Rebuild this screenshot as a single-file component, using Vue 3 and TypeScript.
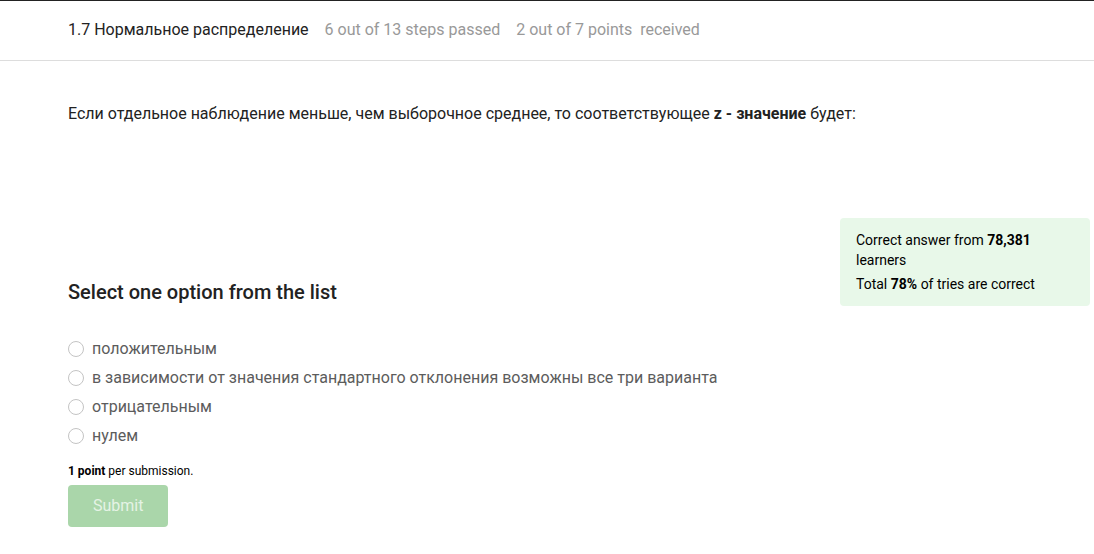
<script setup lang="ts">
import { ref } from 'vue'

const options: string[] = [
  'положительным',
  'в зависимости от значения стандартного отклонения возможны все три варианта',
  'отрицательным',
  'нулем',
]
const selected = ref<string | null>(null)
</script>

<template>
  <div class="page">
    <header class="topbar">
      <h1 class="lesson">1.7 Нормальное распределение</h1>
      <span>6 out of 13 steps passed</span>
      <span>2 out of 7 points&nbsp; received</span>
    </header>
    <main class="content">
      <p class="question">
        Если отдельное наблюдение меньше, чем выборочное среднее, то соответствующее
        <b>z - значение</b> будет:
      </p>
      <div class="quiz">
        <form class="form" @submit.prevent>
          <fieldset class="choices">
            <legend class="title">Select one option from the list</legend>
            <label v-for="option in options" :key="option" class="choice">
              <input v-model="selected" class="radio" type="radio" name="answer" :value="option" />
              <span>{{ option }}</span>
            </label>
          </fieldset>
          <p class="points"><b>1 point</b> per submission.</p>
          <button class="submit" type="submit" :disabled="selected === null">Submit</button>
        </form>
        <aside class="stats">
          <p>Correct answer from <b>78,381</b> learners</p>
          <p>Total <b>78%</b> of tries are correct</p>
        </aside>
      </div>
    </main>
  </div>
</template>

<style>
body {
  margin: 0;
  background: #fff;
}
</style>

<style scoped>
.page {
  border-top: 1px solid #222;
  font-family: Roboto, sans-serif;
  font-size: 16px;
  line-height: 24px;
  color: #222;
}
.topbar {
  display: flex;
  align-items: center;
  gap: 16px;
  padding: 17px 16px 18px 68px;
  border-bottom: 1px solid #ddd;
  color: #999;
}
.lesson {
  margin: 0;
  font-size: 16px;
  font-weight: 400;
  color: #222;
}
.content {
  padding: 41px 4px 24px 68px;
}
.question {
  margin: 0;
}
.quiz {
  display: flex;
  align-items: flex-start;
  justify-content: space-between;
  gap: 24px;
  margin-top: 92px;
}
.form {
  flex: 1;
  padding-top: 60px;
}
.choices {
  margin: 0;
  padding: 0;
  border: 0;
}
.title {
  margin-bottom: 28px;
  padding: 0;
  font-size: 20px;
  font-weight: 500;
  line-height: 28px;
}
.choice {
  display: flex;
  align-items: center;
  gap: 8px;
  height: 29px;
  color: #5c5c5c;
}
.radio {
  appearance: none;
  width: 16px;
  height: 16px;
  margin: 0;
  border: 1px solid #c4c4c4;
  border-radius: 50%;
  background: #fff;
}
.radio:checked {
  border: 5px solid #54ad54;
}
.points {
  margin: 12px 0 5px;
  font-size: 12px;
  line-height: 18px;
  color: #000;
}
.submit {
  display: block;
  padding: 9px 25px;
  border: 0;
  border-radius: 4px;
  background: #54ad54;
  color: #fff;
  font: inherit;
}
.submit:disabled {
  background: #aad6aa;
  color: #e5f3e5;
}
.stats {
  box-sizing: border-box;
  width: 250px;
  padding: 12px 16px;
  border-radius: 4px;
  background: #e8f8e9;
  font-size: 14px;
  line-height: 20px;
  color: #000;
}
.stats p {
  margin: 0;
}
.stats p + p {
  margin-top: 4px;
}
</style>
